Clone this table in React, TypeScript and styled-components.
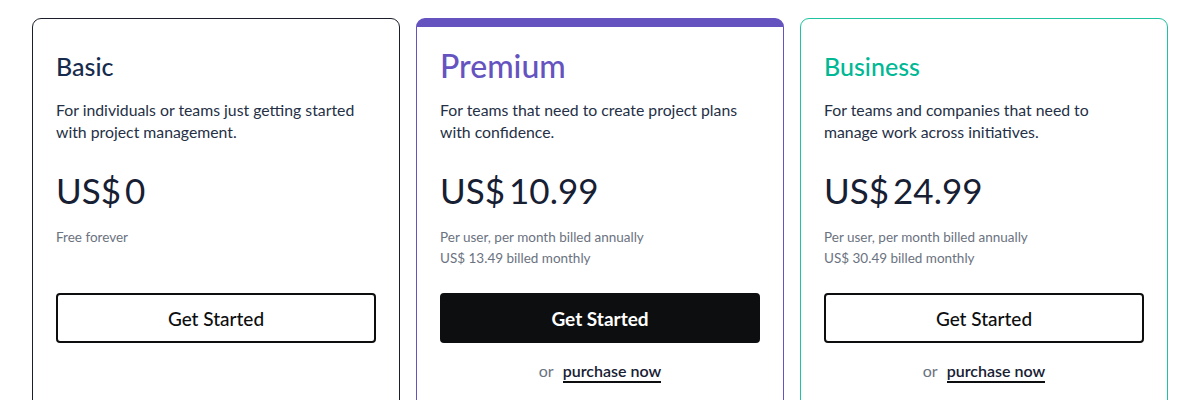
import React from "react";
import styled, { createGlobalStyle } from "styled-components";

const Global = createGlobalStyle`
  html, body { margin: 0; padding: 0; background: #ffffff; }
  body { font-family: Lato, "Noto Sans", sans-serif; color: #172b4d; }
  * { box-sizing: border-box; }
`;

const Grid = styled.div`
  display: grid;
  grid-template-columns: repeat(3, 368px);
  gap: 16px;
  padding: 18px 32px 0;
  height: 420px;
`;

type Tone = "basic" | "premium" | "business";

const toneColor: Record<Tone, string> = {
  basic: "#1b1f2b",
  premium: "#6554c0",
  business: "#1fc3a0",
};

const titleColor: Record<Tone, string> = {
  basic: "#172b4d",
  premium: "#6554c0",
  business: "#00b894",
};

const Card = styled.div<{ $tone: Tone }>`
  border: 1px solid ${(p) => toneColor[p.$tone]};
  border-top-width: ${(p) => (p.$tone === "premium" ? "9px" : "1px")};
  border-radius: 9px;
  padding: ${(p) => (p.$tone === "premium" ? "21px" : "29px")} 23px 0 23px;
  display: flex;
  flex-direction: column;
  align-items: stretch;
`;

const Title = styled.h2<{ $tone: Tone }>`
  margin: 0;
  font-weight: 500;
  font-size: ${(p) => (p.$tone === "premium" ? "32px" : "25px")};
  line-height: 36px;
  color: ${(p) => titleColor[p.$tone]};
`;

const Desc = styled.p`
  margin: 15px 0 0;
  font-size: 15.8px;
  line-height: 22px;
  color: #253046;
`;

const Price = styled.div`
  margin-top: 27px;
  font-size: 35px;
  line-height: 40px;
  font-weight: 400;
  color: #172033;
`;

const Currency = styled.span`
  margin-right: 4px;
`;

const Note = styled.div`
  margin-top: 17px;
  font-size: 13.5px;
  line-height: 21px;
  color: #6b7280;
  min-height: 42px;
`;

const Button = styled.button<{ $filled?: boolean }>`
  margin-top: 24px;
  height: 50px;
  width: 100%;
  border-radius: 4px;
  border: 2px solid #0d0e10;
  background: ${(p) => (p.$filled ? "#0d0e10" : "#ffffff")};
  color: ${(p) => (p.$filled ? "#ffffff" : "#0d0e10")};
  font-family: inherit;
  font-size: 19px;
  font-weight: ${(p) => (p.$filled ? 700 : 500)};
  cursor: pointer;
`;

const Alt = styled.div`
  margin-top: 18px;
  text-align: center;
  font-size: 16px;
  line-height: 20px;
  color: #6b7280;
`;

const AltLink = styled.a`
  margin-left: 9px;
  color: #172033;
  font-weight: 600;
  text-decoration: none;
  border-bottom: 2px solid #0d0e10;
  padding-bottom: 1px;
`;

const plans = [
  {
    tone: "basic" as Tone,
    name: "Basic",
    desc: ["For individuals or teams just getting started", "with project management."],
    price: "0",
    notes: ["Free forever"],
    filled: false,
    purchase: false,
  },
  {
    tone: "premium" as Tone,
    name: "Premium",
    desc: ["For teams that need to create project plans", "with confidence."],
    price: "10.99",
    notes: ["Per user, per month billed annually", "US$ 13.49 billed monthly"],
    filled: true,
    purchase: true,
  },
  {
    tone: "business" as Tone,
    name: "Business",
    desc: ["For teams and companies that need to", "manage work across initiatives."],
    price: "24.99",
    notes: ["Per user, per month billed annually", "US$ 30.49 billed monthly"],
    filled: false,
    purchase: true,
  },
];

export default function App() {
  return (
    <>
      <Global />
      <Grid>
        {plans.map((p) => (
          <Card key={p.name} $tone={p.tone}>
            <Title $tone={p.tone}>{p.name}</Title>
            <Desc>
              {p.desc[0]}
              <br />
              {p.desc[1]}
            </Desc>
            <Price>
              <Currency>US$</Currency>
              {p.price}
            </Price>
            <Note>
              {p.notes.map((n) => (
                <div key={n}>{n}</div>
              ))}
            </Note>
            <Button $filled={p.filled}>Get Started</Button>
            {p.purchase && (
              <Alt>
                or<AltLink href="#">purchase now</AltLink>
              </Alt>
            )}
          </Card>
        ))}
      </Grid>
    </>
  );
}
